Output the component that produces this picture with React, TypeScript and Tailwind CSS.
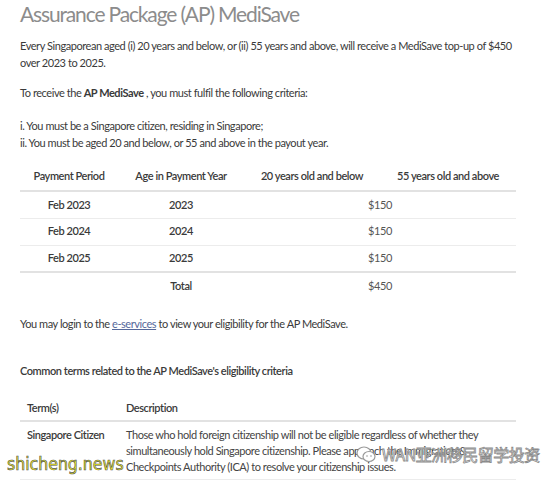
import React from 'react'

const rows = [
  { period: 'Feb 2023', year: '2023', amount: '$150' },
  { period: 'Feb 2024', year: '2024', amount: '$150' },
  { period: 'Feb 2025', year: '2025', amount: '$150' },
]

function WeChatMark() {
  return (
    <svg width="20" height="17" viewBox="0 0 20 17" fill="none">
      <ellipse cx="8" cy="7" rx="7" ry="6" stroke="#9a9a9a" strokeWidth="1.2" fill="white" />
      <ellipse cx="13" cy="10.5" rx="6" ry="5" stroke="#9a9a9a" strokeWidth="1.2" fill="white" />
      <circle cx="11" cy="10" r="0.8" fill="#9a9a9a" />
      <circle cx="15" cy="10" r="0.8" fill="#9a9a9a" />
    </svg>
  )
}

export default function App() {
  return (
    <div className="relative w-[554px] h-[481px] overflow-hidden bg-white font-['Lato',sans-serif] text-[#3a3a3a] text-[11px] tracking-[-0.44px]">
      <div className="px-[20px] pt-[1px]">
        <h1 className="text-[21px] leading-[26px] font-normal tracking-[-1.15px] text-[#8c8c8c]">Assurance Package (AP) MediSave</h1>

        <p className="mt-[10px] max-w-[492px] leading-[17px]">
          Every Singaporean aged (i) 20 years and below, or (ii) 55 years and above, will receive a MediSave top-up of $450 over 2023 to 2025.
        </p>

        <p className="mt-[13px] leading-[17px]">
          To receive the <span className="font-bold">AP MediSave</span> , you must fulfil the following criteria:
        </p>

        <p className="mt-[16px] leading-[17px]">
          i. You must be a Singapore citizen, residing in Singapore;
          <br />
          ii. You must be aged 20 and below, or 55 and above in the payout year.
        </p>

        <table className="mt-[12px] w-[496px] table-fixed border-collapse">
          <colgroup>
            <col className="w-[98px]" />
            <col className="w-[126px]" />
            <col className="w-[136px]" />
            <col className="w-[136px]" />
          </colgroup>
          <thead>
            <tr className="h-[28px] border-b-2 border-[#e2e2e2]">
              <th className="font-semibold text-center align-middle">Payment Period</th>
              <th className="font-semibold text-center align-middle">Age in Payment Year</th>
              <th className="font-semibold text-center align-middle">20 years old and below</th>
              <th className="font-semibold text-center align-middle">55 years old and above</th>
            </tr>
          </thead>
          <tbody>
            {rows.map((r, i) => (
              <tr
                key={r.period}
                className={
                  i === rows.length - 1
                    ? 'h-[27px] border-b-2 border-[#e2e2e2]'
                    : 'h-[27px] border-b border-[#ececec]'
                }
              >
                <td className="text-center font-semibold">{r.period}</td>
                <td className="text-center font-semibold">{r.year}</td>
                <td colSpan={2} className="text-center text-[#555]">{r.amount}</td>
              </tr>
            ))}
            <tr className="h-[27px]">
              <td />
              <td className="text-center font-semibold">Total</td>
              <td colSpan={2} className="text-center text-[#555]">$450</td>
            </tr>
          </tbody>
        </table>

        <p className="mt-[16px] leading-[17px]">
          You may login to the <span className="underline text-[#56689a]">e-services</span> to view your eligibility for the AP MediSave.
        </p>

        <p className="mt-[30px] leading-[17px] font-semibold">
          Common terms related to the AP MediSave's eligibility criteria
        </p>

        <table className="mt-[17px] w-[496px] table-fixed border-collapse">
          <colgroup>
            <col className="w-[99px]" />
            <col />
          </colgroup>
          <thead>
            <tr className="h-[25px] border-b-2 border-[#e2e2e2]">
              <th className="pl-[7px] text-left align-middle font-semibold">Term(s)</th>
              <th className="pl-[7px] text-left align-middle font-semibold">Description</th>
            </tr>
          </thead>
          <tbody>
            <tr className="border-b border-[#ececec]">
              <td className="pl-[7px] pt-[5px] align-top font-semibold leading-[16px]">Singapore Citizen</td>
              <td className="pl-[7px] pr-[30px] pt-[5px] pb-[4px] align-top leading-[16px] text-[#444]">
                Those who hold foreign citizenship will not be eligible regardless of whether they simultaneously hold Singapore citizenship. Please approach the Immigration &amp; Checkpoints Authority (ICA) to resolve your citizenship issues.
              </td>
            </tr>
          </tbody>
        </table>
      </div>

      <div className="absolute left-[7px] top-[452px] font-['DejaVu_Sans_Condensed','DejaVu_Sans',sans-serif] text-[17.5px] leading-[24px] tracking-normal text-[#eeee1a] [-webkit-text-stroke:0.6px_#555]">
        shicheng.news
      </div>

      <div className="absolute left-[356px] top-[444px] flex items-center gap-[6px]">
        <WeChatMark />
        <span className="font-['Noto_Sans_CJK_SC',sans-serif] text-[16px] leading-[20px] text-white [-webkit-text-stroke:0.8px_#8a8a8a] tracking-[-0.5px]">
          WAN亚洲移民留学投资
        </span>
      </div>
    </div>
  )
}
